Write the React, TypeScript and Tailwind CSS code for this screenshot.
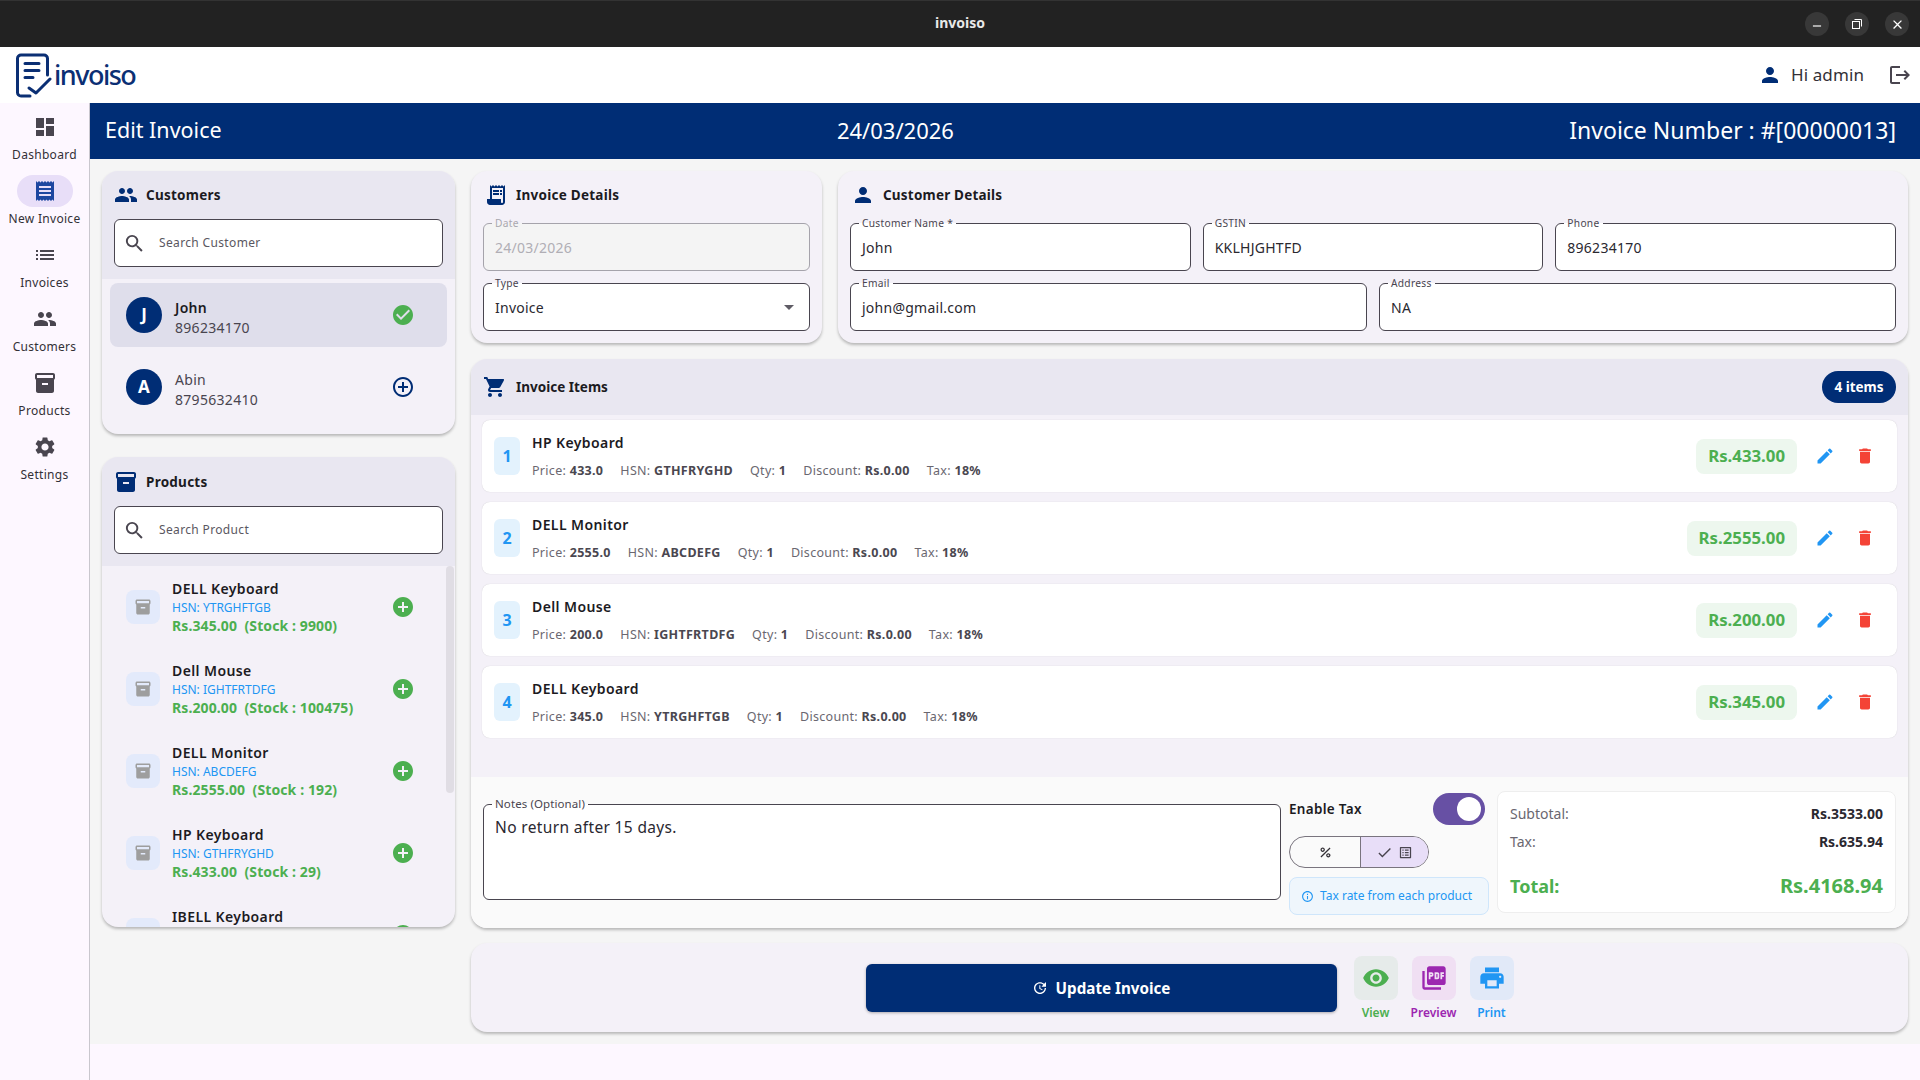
import React from "react";
import {
  MdDashboard, MdReceipt, MdList, MdPeople, MdInventory2, MdSettings, MdSearch, MdCheckCircle,
  MdAddCircleOutline, MdAddCircle, MdPerson, MdLogout, MdReceiptLong, MdShoppingCart, MdEdit, MdDelete,
  MdVisibility, MdPictureAsPdf, MdPrint, MdPercent, MdCheck, MdOutlineListAlt, MdInfoOutline, MdUpdate, MdArrowDropDown,
  MdClose, MdRemove,
} from "react-icons/md";

const nav = [
  { label: "Dashboard", Icon: MdDashboard },
  { label: "New Invoice", Icon: MdReceipt, active: true },
  { label: "Invoices", Icon: MdList },
  { label: "Customers", Icon: MdPeople },
  { label: "Products", Icon: MdInventory2 },
  { label: "Settings", Icon: MdSettings },
];

const products = [
  { name: "DELL Keyboard", hsn: "YTRGHFTGB", price: "Rs.345.00", stock: "9900" },
  { name: "Dell Mouse", hsn: "IGHTFRTDFG", price: "Rs.200.00", stock: "100475" },
  { name: "DELL Monitor", hsn: "ABCDEFG", price: "Rs.2555.00", stock: "192" },
  { name: "HP Keyboard", hsn: "GTHFRYGHD", price: "Rs.433.00", stock: "29" },
  { name: "IBELL Keyboard" },
];

const items = [
  { n: 1, name: "HP Keyboard", price: "433.0", hsn: "GTHFRYGHD", amount: "Rs.433.00" },
  { n: 2, name: "DELL Monitor", price: "2555.0", hsn: "ABCDEFG", amount: "Rs.2555.00" },
  { n: 3, name: "Dell Mouse", price: "200.0", hsn: "IGHTFRTDFG", amount: "Rs.200.00" },
  { n: 4, name: "DELL Keyboard", price: "345.0", hsn: "YTRGHFTGB", amount: "Rs.345.00" },
];

function Field({ label, value, className = "", disabled = false, caret = false }: { label: string; value: string; className?: string; disabled?: boolean; caret?: boolean }) {
  return (
    <div className={`relative h-[48px] rounded-[6px] border flex items-center pl-[11px] pr-[10px] text-[14px] tracking-[0.25px] ${disabled ? "border-[#a5a3ab] bg-[#f4f4f4] text-[#b0aeb5]" : "border-[#49454f] bg-white text-[#2a2830]"} ${className}`}>
      <span className={`absolute left-[8px] top-[-7px] px-[3px] text-[10.2px] leading-[12px] tracking-[0.3px] ${disabled ? "text-[#aaa8af] bg-[linear-gradient(#f4f1f8_50%,#f4f4f4_50%)]" : "text-[#49454f] bg-[linear-gradient(#f4f1f8_50%,#ffffff_50%)]"}`}>{label}</span>
      <span className="flex-1">{value}</span>
      {caret && <MdArrowDropDown className="text-[24px] text-[#5f5c65] mr-[-2px]" />}
    </div>
  );
}

function SearchBox({ placeholder }: { placeholder: string }) {
  return (
    <div className="h-[48px] rounded-[6px] border border-[#49454f] bg-white flex items-center pl-[8px] gap-[13px]">
      <MdSearch className="text-[23px] text-[#49454f]" />
      <span className="text-[12px] tracking-[0.35px] text-[#5a5761]">{placeholder}</span>
    </div>
  );
}

const cardShadow = "shadow-[0_2px_3px_rgba(0,0,0,0.25)]";

export default function App() {
  return (
    <div className="h-[1080px] w-[1920px] overflow-hidden flex flex-col font-['Noto_Sans',sans-serif] text-[#1c1b1f] bg-[#fdf7ff]">
      <div className="h-[47px] shrink-0 bg-[#222222] border-t border-[#333333] flex items-center justify-end relative">
        <span className="absolute left-0 right-0 top-[13px] leading-[18px] text-center text-[14px] font-bold text-[#e8e8e8]">invoiso</span>
        <div className="flex gap-[16px] pr-[11px] relative">
          <span className="w-6 h-6 rounded-full bg-[#383838] flex items-center justify-center text-white"><MdRemove className="text-[14px] translate-y-[2px]" /></span>
          <span className="w-6 h-6 rounded-full bg-[#383838] flex items-center justify-center text-white">
            <svg width="10" height="10" viewBox="0 0 10 10" fill="none" stroke="currentColor" strokeWidth="1"><rect x="0.5" y="2.5" width="7" height="7" /><path d="M2.5 0.5h7v7" /></svg>
          </span>
          <span className="w-6 h-6 rounded-full bg-[#383838] flex items-center justify-center text-white"><MdClose className="text-[15px]" /></span>
        </div>
      </div>

      <header className="h-[56px] shrink-0 bg-white flex items-center pl-[16px] pr-[8px]">
        <svg width="36" height="46" viewBox="0 0 36 46" fill="none" stroke="#0b2f74" strokeWidth="3" strokeLinecap="round" strokeLinejoin="round" className="mt-[2px]">
          <path d="M14 43H5a3.5 3.5 0 0 1-3.5-3.5V5.5A3.5 3.5 0 0 1 5 2h23a3.5 3.5 0 0 1 3.5 3.5V22" />
          <path d="M9 10.5h14M9 17.5h14M9 24.5h8" />
          <path d="M13 35l7 5 14-14" />
        </svg>
        <span className="ml-[2px] text-[27px] font-medium tracking-[-1.5px] text-[#0b2f74] mt-[1px]">invoiso</span>
        <div className="flex-1" />
        <MdPerson className="text-[24px] text-[#002d75]" />
        <span className="ml-[9px] text-[17px] tracking-[0.1px] text-[#333036]">Hi admin</span>
        <MdLogout className="ml-[24px] text-[24px] text-[#49454f]" />
      </header>

      <div className="flex-1 flex min-h-0">
        <aside className="w-[90px] shrink-0 border-r border-[#c9c7ce] pt-[8px] flex flex-col">
          {nav.map(({ label, Icon, active }) => (
            <div key={label} className="h-[64px] shrink-0 flex flex-col items-center">
              <div className={`w-[56px] h-[32px] rounded-full flex items-center justify-center ${active ? "bg-[#e8def8]" : ""}`}>
                <Icon className={`text-[24px] ${active ? "text-[#1d47a0]" : "text-[#49454f]"}`} />
              </div>
              <span className="mt-[4px] text-[12px] leading-[16px] tracking-[0.3px] text-[#333036] whitespace-nowrap">{label}</span>
            </div>
          ))}
        </aside>

        <main className="flex-1 min-w-0">
          <div className="h-[56px] bg-[#002d75] text-white flex items-center justify-between pl-[15px] pr-[24px] pb-[1px]">
            <span className="text-[21.5px]">Edit Invoice</span>
            <span className="text-[22px]">24/03/2026</span>
            <span className="text-[23px]">Invoice Number : #[00000013]</span>
          </div>

          <div className="h-[885px] bg-[#f5f5f5] px-[12px] pt-[12px] flex gap-[16px]">
            <div className="w-[353px] shrink-0 flex flex-col gap-[23px]">
              <section className={`h-[263px] rounded-[16px] bg-[#f4f1f8] ${cardShadow} overflow-hidden`}>
                <div className="h-[108px] bg-[#e9e7f1] px-[12px] pt-[12px]">
                  <div className="h-[24px] flex items-center gap-[8px] mb-[12px]">
                    <MdPeople className="text-[24px] text-[#002d75]" />
                    <span className="text-[13.5px] font-bold tracking-[0.25px]">Customers</span>
                  </div>
                  <SearchBox placeholder="Search Customer" />
                </div>
                <div className="px-[8px] pt-[4px] flex flex-col gap-[8px]">
                  <div className="h-[64px] rounded-[8px] bg-[#dfdeeb] flex items-center pl-[16px] pr-[32px]">
                    <span className="w-9 h-9 rounded-full bg-[#002d75] text-white font-bold text-[17px] flex items-center justify-center">J</span>
                    <div className="ml-[13px] flex-1 text-[14px] leading-[20px] tracking-[0.3px] pt-[5px]">
                      <div className="font-semibold">John</div>
                      <div className="text-[#49454f]">896234170</div>
                    </div>
                    <MdCheckCircle className="text-[24px] text-[#4caf50]" />
                  </div>
                  <div className="h-[64px] rounded-[8px] flex items-center pl-[16px] pr-[32px]">
                    <span className="w-9 h-9 rounded-full bg-[#002d75] text-white font-bold text-[17px] flex items-center justify-center">A</span>
                    <div className="ml-[13px] flex-1 text-[14px] leading-[20px] tracking-[0.3px] text-[#49454f] pt-[5px]">
                      <div>Abin</div>
                      <div>8795632410</div>
                    </div>
                    <MdAddCircleOutline className="text-[24px] text-[#002d75]" />
                  </div>
                </div>
              </section>

              <section className={`h-[470px] rounded-[16px] bg-[#f4f1f8] ${cardShadow} overflow-hidden flex flex-col relative`}>
                <div className="h-[109px] shrink-0 bg-[#e9e7f1] px-[12px] pt-[13px]">
                  <div className="h-[24px] flex items-center gap-[8px] mb-[12px]">
                    <MdInventory2 className="text-[24px] text-[#002d75]" />
                    <span className="text-[13.5px] font-bold tracking-[0.25px]">Products</span>
                  </div>
                  <SearchBox placeholder="Search Product" />
                </div>
                <div className="flex-1 overflow-hidden">
                  {products.map((p) => (
                    <div key={p.name} className="h-[82px] shrink-0 flex items-center pl-[24px] pr-[40px]">
                      <span className="w-[34px] h-[34px] rounded-[8px] bg-[#e3eafb] flex items-center justify-center">
                        <MdInventory2 className="text-[18px] text-[#9e9e9e]" />
                      </span>
                      <div className="ml-[12px] flex-1 whitespace-nowrap">
                        <div className="text-[14px] leading-[18px] font-semibold tracking-[0.4px]">{p.name}</div>
                        <div className="h-[19px] text-[12px] leading-[19px] text-[#2196f3]">{p.hsn ? `HSN: ${p.hsn}` : ""}</div>
                        <div className="h-[18px] text-[14px] leading-[18px] tracking-[0.1px] font-bold text-[#4caf50] whitespace-pre">{p.price ? `${p.price}  (Stock : ${p.stock})` : ""}</div>
                      </div>
                      <MdAddCircle className="text-[24px] text-[#4caf50]" />
                    </div>
                  ))}
                </div>
                <div className="absolute right-[1px] top-[109px] h-[227px] w-[8px] rounded-full bg-[#e0dde4]" />
              </section>
            </div>

            <div className="flex-1 min-w-0 flex flex-col">
              <div className="h-[172px] shrink-0 flex gap-[16px]">
                <section className={`w-[351px] shrink-0 rounded-[16px] bg-[#f4f1f8] ${cardShadow} px-[12px] pt-[12px]`}>
                  <div className="h-[24px] flex items-center gap-[8px] mb-[16px] pl-[1px]">
                    <MdReceiptLong className="text-[24px] text-[#002d75]" />
                    <span className="text-[13.5px] font-bold tracking-[0.25px]">Invoice Details</span>
                  </div>
                  <Field label="Date" value="24/03/2026" disabled />
                  <Field label="Type" value="Invoice" caret className="mt-[12px]" />
                </section>
                <section className={`flex-1 min-w-0 rounded-[16px] bg-[#f4f1f8] ${cardShadow} px-[12px] pt-[12px]`}>
                  <div className="h-[24px] flex items-center gap-[8px] mb-[16px] pl-[1px]">
                    <MdPerson className="text-[24px] text-[#002d75]" />
                    <span className="text-[13.5px] font-bold tracking-[0.2px]">Customer Details</span>
                  </div>
                  <div className="flex gap-[12px]">
                    <Field label="Customer Name *" value="John" className="flex-1" />
                    <Field label="GSTIN" value="KKLHJGHTFD" className="flex-1" />
                    <Field label="Phone" value="896234170" className="flex-1" />
                  </div>
                  <div className="flex gap-[12px] mt-[12px]">
                    <Field label="Email" value="john@gmail.com" className="flex-1" />
                    <Field label="Address" value="NA" className="flex-1" />
                  </div>
                </section>
              </div>

              <section className={`mt-[16px] h-[569px] shrink-0 rounded-[16px] bg-[#f4f1f8] ${cardShadow} overflow-hidden flex flex-col`}>
                <div className="h-[56px] shrink-0 bg-[#e9e7f1] flex items-center pl-[12px] pr-[12px]">
                  <MdShoppingCart className="text-[24px] text-[#002d75]" />
                  <span className="ml-[9px] text-[13.5px] font-bold flex-1">Invoice Items</span>
                  <span className="w-[74px] h-[32px] rounded-full bg-[#002d75] text-white text-[13.5px] font-bold flex items-center justify-center">4 items</span>
                </div>
                <div className="flex-1 px-[11px] pt-[5px] flex flex-col gap-[10px]">
                  {items.map((it) => (
                    <div key={it.n} className="h-[72px] shrink-0 rounded-[8px] bg-white shadow-[0_0_1px_rgba(0,0,0,0.2)] flex items-center pl-[12px] pr-[22px]">
                      <span className="w-[26px] h-[38px] rounded-[6px] bg-[#e3f2fd] text-[#2196f3] font-bold text-[16px] flex items-center justify-center">{it.n}</span>
                      <div className="ml-[12px] flex-1">
                        <div className="text-[14px] font-semibold leading-[20px] tracking-[0.4px]">{it.name}</div>
                        <div className="mt-[10px] text-[12.5px] leading-[16px] text-[#6a6770] flex gap-[17px] tracking-[0.3px]">
                          <span>Price: <b className="text-[#4a4750]">{it.price}</b></span>
                          <span>HSN: <b className="text-[#4a4750]">{it.hsn}</b></span>
                          <span>Qty: <b className="text-[#4a4750]">1</b></span>
                          <span>Discount: <b className="text-[#4a4750]">Rs.0.00</b></span>
                          <span>Tax: <b className="text-[#4a4750]">18%</b></span>
                        </div>
                      </div>
                      <span className="h-[35px] px-[12px] rounded-[8px] bg-[#edf7ee] text-[#4caf50] font-bold text-[16.8px] flex items-center">{it.amount}</span>
                      <MdEdit className="ml-[18px] text-[20px] text-[#2196f3]" />
                      <MdDelete className="ml-[20px] text-[20px] text-[#f44336]" />
                    </div>
                  ))}
                </div>
                <div className="h-[151px] shrink-0 bg-[#fafafa] px-[12px] pt-[14px] flex">
                  <div className="relative w-[798px] h-[96px] mt-[13px] rounded-[6px] border border-[#49454f] bg-white px-[11px] pt-[11px] text-[15.5px] leading-[22px] tracking-[0.35px] text-[#2a2830]">
                    <span className="absolute left-[8px] top-[-7px] px-[3px] text-[11.5px] leading-[12px] tracking-[0.1px] text-[#49454f] bg-[linear-gradient(#fafafa_50%,#ffffff_50%)]">Notes (Optional)</span>
                    No return after 15 days.
                  </div>
                  <div className="ml-[8px] w-[200px] shrink-0">
                    <div className="flex items-center justify-between h-[32px] mt-[2px] pr-[4px]">
                      <span className="text-[13.5px] font-semibold tracking-[0.3px]">Enable Tax</span>
                      <span className="w-[52px] h-[32px] rounded-full bg-[#6750a4] flex items-center justify-end pr-[4px]"><span className="w-6 h-6 rounded-full bg-white" /></span>
                    </div>
                    <div className="mt-[11px] w-[140px] h-[32px] rounded-full border border-[#79747e] flex overflow-hidden">
                      <span className="w-[70px] flex items-center justify-center text-[#333036]"><MdPercent className="text-[15px]" /></span>
                      <span className="flex-1 border-l border-[#79747e] bg-[#e8def8] flex items-center justify-center gap-[5px] text-[#49454f]"><MdCheck className="text-[17px]" /><MdOutlineListAlt className="text-[15px]" /></span>
                    </div>
                    <div className="mt-[9px] h-[38px] rounded-[8px] border border-[#cfe6fb] bg-[#eff6fc] flex items-center pl-[11px] gap-[6px] text-[12px] text-[#2196f3] whitespace-nowrap">
                      <MdInfoOutline className="text-[13px]" />
                      <span>Tax rate from each product</span>
                    </div>
                  </div>
                  <div className="ml-[8px] w-[399px] h-[122px] shrink-0 rounded-[8px] border border-[#eeeeee] bg-white px-[12px] pt-[11px]">
                    <div className="flex justify-between items-center h-[20px] text-[14px]"><span className="text-[#6a6770]">Subtotal:</span><b className="text-[#2a2830]">Rs.3533.00</b></div>
                    <div className="flex justify-between items-center h-[20px] mt-[8px] text-[14px]"><span className="text-[#6a6770]">Tax:</span><b className="text-[#2a2830]">Rs.635.94</b></div>
                    <div className="flex justify-between items-center h-[28px] mt-[21px] text-[#4caf50] font-bold"><span className="text-[18px]">Total:</span><span className="text-[20px]">Rs.4168.94</span></div>
                  </div>
                </div>
              </section>

              <section className={`mt-[15px] h-[89px] shrink-0 rounded-[16px] bg-[#f4f1f8] ${cardShadow} flex items-center justify-center`}>
                <button className="w-[471px] h-[48px] pt-[1px] rounded-[6px] bg-[#002d75] text-white text-[15.2px] font-bold flex items-center justify-center gap-[8px] shadow-[0_1px_3px_rgba(0,0,0,0.3)]">
                  <MdUpdate className="text-[16px]" />Update Invoice
                </button>
                <div className="ml-[17px] flex gap-[14px] pt-[2px]">
                  {[
                    { label: "View", Icon: MdVisibility, color: "text-[#4caf50]", bg: "bg-[#e6ebea]" },
                    { label: "Preview", Icon: MdPictureAsPdf, color: "text-[#9c27b0]", bg: "bg-[#f0dff3]" },
                    { label: "Print", Icon: MdPrint, color: "text-[#2196f3]", bg: "bg-[#e1e9f8]" },
                  ].map(({ label, Icon, color, bg }) => (
                    <div key={label} className="w-[44px] flex flex-col items-center">
                      <span className={`w-[44px] h-[44px] rounded-[8px] flex items-center justify-center ${bg} ${color}`}><Icon className="text-[28px]" /></span>
                      <span className={`mt-[5px] text-[12px] leading-[16px] font-semibold ${color}`}>{label}</span>
                    </div>
                  ))}
                </div>
              </section>
            </div>
          </div>
        </main>
      </div>
    </div>
  );
}
